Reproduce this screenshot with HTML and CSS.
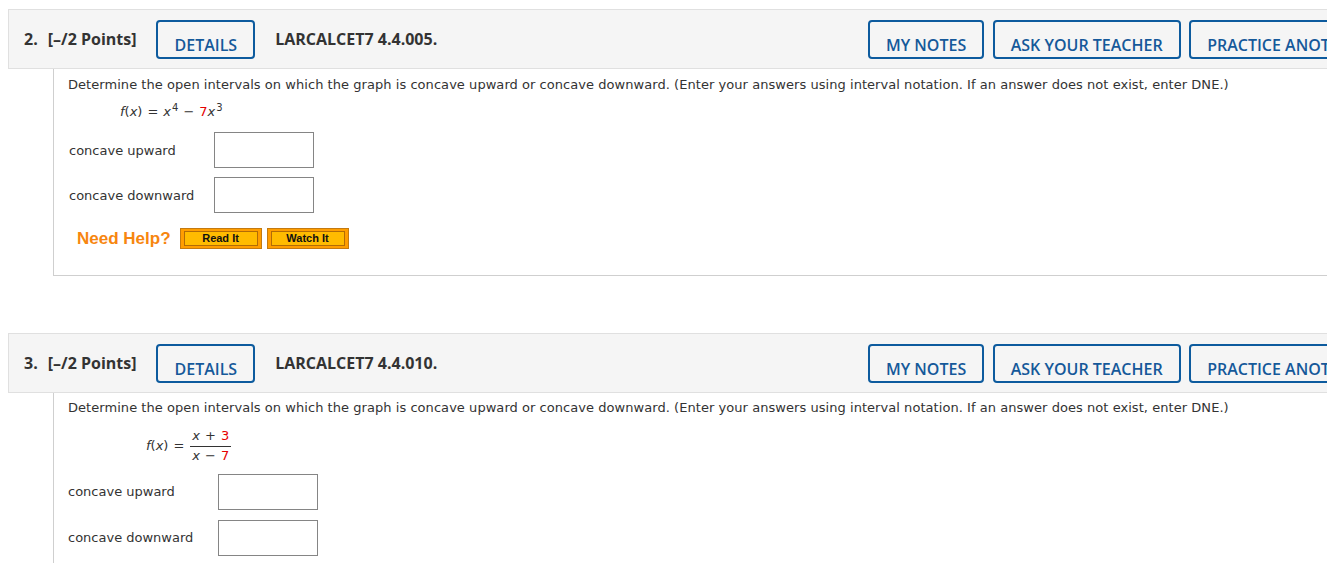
FILE: index.html
```html
<!DOCTYPE html>
<html lang="en">
<head>
<meta charset="utf-8">
<title>Questions</title>
<link rel="stylesheet" href="styles.css">
</head>
<body>
<div class="page">
  <section class="question">
    <div class="qhead">
      <span class="qnum">2.</span>
      <span class="points">[–/2 Points]</span>
      <button class="hbtn details">DETAILS</button>
      <span class="qid">LARCALCET7 4.4.005.</span>
      <div class="actions">
        <button class="hbtn">MY NOTES</button>
        <button class="hbtn">ASK YOUR TEACHER</button>
        <button class="hbtn">PRACTICE ANOTHER</button>
      </div>
    </div>
    <div class="qbody q1">
      <p class="prompt">Determine the open intervals on which the graph is concave upward or concave downward. (Enter your answers using interval notation. If an answer does not exist, enter DNE.)</p>
      <div class="formula f1"><i>f</i>(<i>x</i>)<span class="op">=</span><i>x</i><sup>4</sup><span class="op">−</span><span class="red">7</span><i>x</i><sup>3</sup></div>
      <div class="answers a1">
        <label class="alabel">concave upward</label>
        <input class="abox" type="text">
        <label class="alabel">concave downward</label>
        <input class="abox" type="text">
      </div>
      <div class="help">
        <span class="need">Need Help?</span>
        <span class="hb"><span class="hb-in">Read It</span></span>
        <span class="hb"><span class="hb-in">Watch It</span></span>
      </div>
    </div>
  </section>

  <section class="question second">
    <div class="qhead">
      <span class="qnum">3.</span>
      <span class="points">[–/2 Points]</span>
      <button class="hbtn details">DETAILS</button>
      <span class="qid">LARCALCET7 4.4.010.</span>
      <div class="actions">
        <button class="hbtn">MY NOTES</button>
        <button class="hbtn">ASK YOUR TEACHER</button>
        <button class="hbtn">PRACTICE ANOTHER</button>
      </div>
    </div>
    <div class="qbody q2">
      <p class="prompt">Determine the open intervals on which the graph is concave upward or concave downward. (Enter your answers using interval notation. If an answer does not exist, enter DNE.)</p>
      <div class="formula f2">
        <span class="lhs"><i>f</i>(<i>x</i>)<span class="op">=</span></span>
        <span class="frac">
          <span class="num"><i>x</i><span class="op">+</span><span class="red">3</span></span>
          <span class="den"><i>x</i><span class="op">−</span><span class="red">7</span></span>
        </span>
      </div>
      <div class="answers a2">
        <label class="alabel">concave upward</label>
        <input class="abox" type="text">
        <label class="alabel">concave downward</label>
        <input class="abox" type="text">
      </div>
    </div>
  </section>
</div>
</body>
</html>
```

FILE: styles.css
```css
html { overflow: hidden; }
body {
  margin: 0;
  background: #fff;
  font-family: "DejaVu Sans", Verdana, sans-serif;
}
.page {
  width: 1382px;
  padding: 9px 0 0 8px;
}
.question.second { margin-top: 57px; }

.qhead {
  display: flex;
  align-items: center;
  height: 60px;
  box-sizing: border-box;
  padding: 0 10px 0 15px;
  background: #f5f5f5;
  border: 1px solid #e0e0e0;
  font-family: "Open Sans", sans-serif;
  font-weight: 700;
  font-size: 16px;
  color: #333;
}
.qnum { margin-right: 10px; }
.hbtn {
  font-family: "Open Sans", sans-serif;
  font-weight: 600;
  font-size: 16px;
  line-height: 19px;
  color: #15599a;
  background: transparent;
  border: 2px solid #0d5b9e;
  border-radius: 4px;
  padding: 14px 16px 2px;
  margin: 0;
  white-space: nowrap;
}
.details { margin-left: 20px; }
.qid { margin-left: 20px; }
.actions {
  margin-left: auto;
  display: flex;
  gap: 8.5px;
}

.qbody {
  margin-left: 45px;
  border-left: 1px solid #cfcfcf;
  padding: 8px 0 26px 14px;
  font-size: 13px;
  color: #333;
}
.q1 { border-bottom: 1px solid #cfcfcf; }
.q2 { padding-top: 7px; padding-bottom: 40px; }
.prompt {
  margin: 0;
  line-height: 16px;
  white-space: nowrap;
  letter-spacing: 0.05px;
}
.red { color: #e60000; }
.op { margin: 0 5px; }
.formula { line-height: 16px; }
.formula sup {
  font-size: 10px;
  line-height: 0;
  vertical-align: 5px;
}
.f1 { margin-top: 11px; padding-left: 52px; }
.f1 sup { margin-left: 1px; }
.f2 {
  margin-top: 13px;
  padding-left: 78px;
  display: flex;
  align-items: center;
  gap: 0;
}
.f2 .lhs .op { margin-right: 6px; }
.frac {
  display: flex;
  flex-direction: column;
  align-items: stretch;
  text-align: center;
}
.num {
  line-height: 14px;
  padding: 0 2px 3px;
  border-bottom: 1px solid #333;
}
.den {
  line-height: 14px;
  padding: 2px 2px 0;
}

.answers {
  display: grid;
  align-items: center;
}
.a1 {
  margin-top: 12px;
  grid-template-columns: 145px 100px;
  row-gap: 9px;
  padding-left: 1px;
}
.a1 .alabel { padding-top: 2px; }
.a2 {
  margin-top: 11px;
  grid-template-columns: 150px 100px;
  row-gap: 10px;
}
.alabel { line-height: 16px; }
.abox {
  width: 100px;
  height: 36px;
  box-sizing: border-box;
  border: 1px solid #858585;
  margin: 0;
  padding: 0;
  background: #fff;
}

.help {
  display: flex;
  align-items: center;
  margin-top: 15px;
  padding-left: 9px;
}
.need {
  font-family: "Liberation Sans", Arial, sans-serif;
  font-weight: 700;
  font-size: 17px;
  color: #f7860f;
  margin-right: 9px;
}
.hb {
  display: block;
  border: 1px solid #c47a10;
  background: #ff9d00;
  padding: 2px 3px;
  margin-right: 5px;
}
.hb-in {
  display: block;
  width: 72px;
  border: 1px solid #b26c06;
  background: #ffbb00;
  font-family: "Liberation Sans", Arial, sans-serif;
  font-weight: 700;
  font-size: 11px;
  line-height: 13px;
  color: #111;
  text-align: center;
}
```
